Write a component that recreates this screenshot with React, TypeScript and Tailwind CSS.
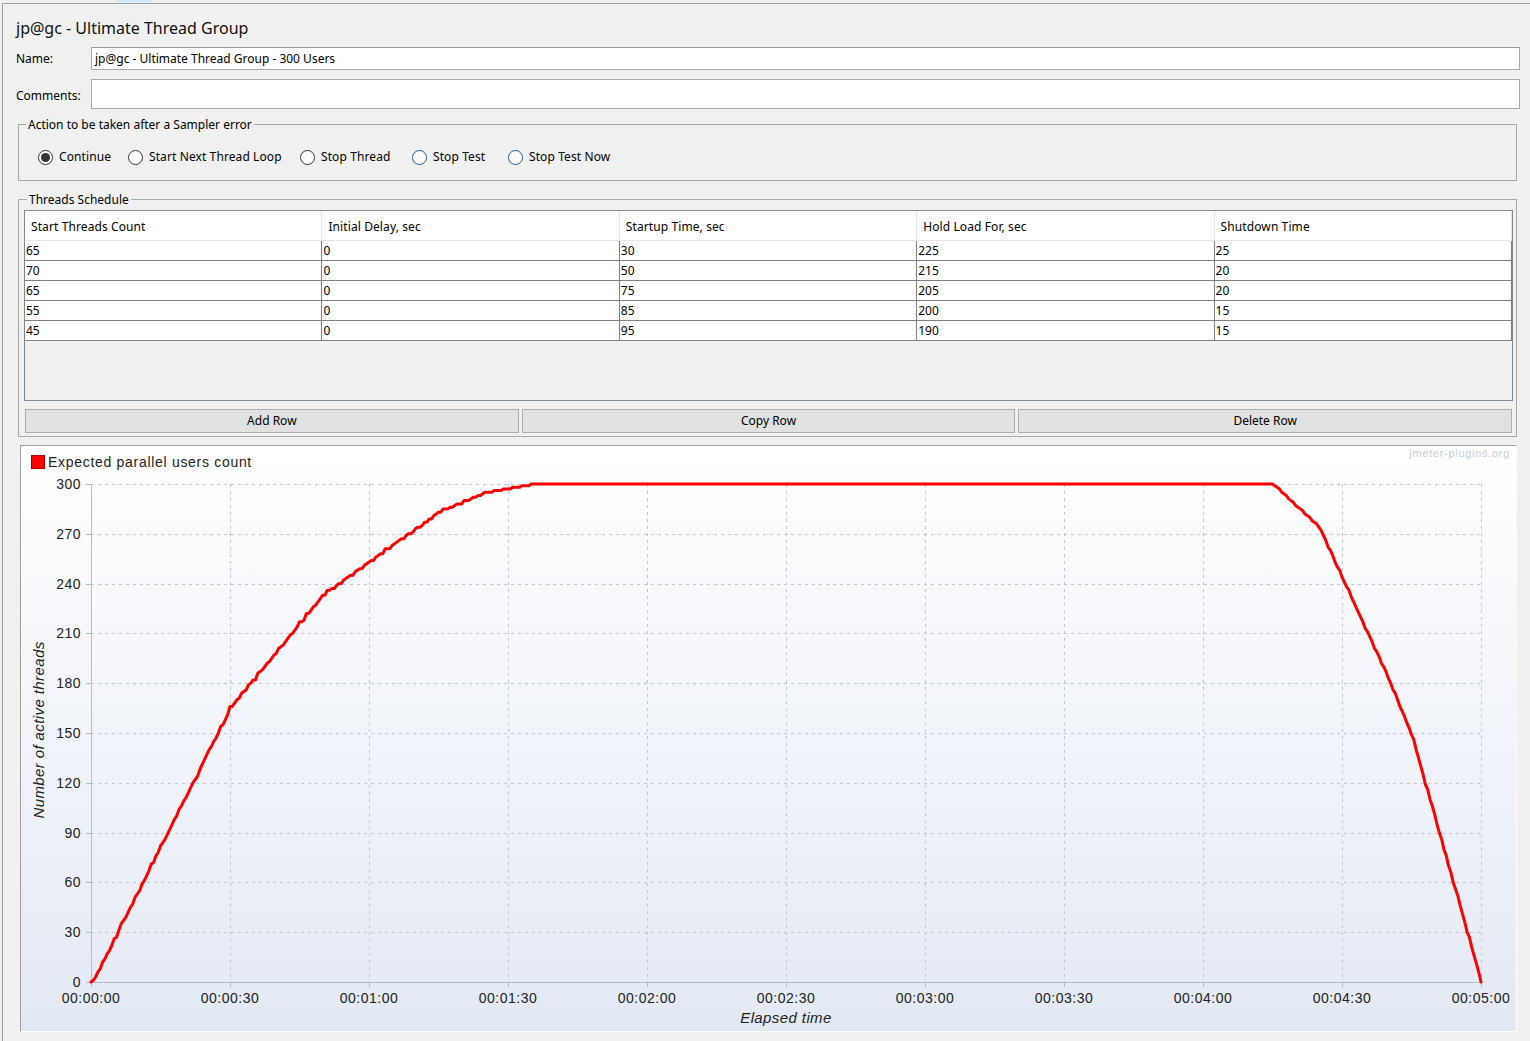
import React from 'react';

const rows: number[][] = [
  [65, 0, 30, 225, 25],
  [70, 0, 50, 215, 20],
  [65, 0, 75, 205, 20],
  [55, 0, 85, 200, 15],
  [45, 0, 95, 190, 15],
];

function active(t: number) {
  let s = 0;
  for (const [n, d, su, h, sd] of rows) {
    if (t < d) continue;
    const t1 = t - d;
    if (t1 < su) s += Math.floor((n * t1) / su);
    else if (t1 < su + h) s += n;
    else if (t1 < su + h + sd) s += Math.ceil(n * (1 - (t1 - su - h) / sd));
  }
  return s;
}

const W = 1495;
const H = 585;
const X0 = 70;
const X1 = 1460;
const Y0 = 536;
const Y1 = 38;
const px = (t: number) => X0 + (t / 300) * (X1 - X0);
const py = (v: number) => Y0 - (v / 300) * (Y0 - Y1);

function fmt(t: number) {
  const m = Math.floor(t / 60);
  const s = t % 60;
  return `00:${String(m).padStart(2, '0')}:${String(s).padStart(2, '0')}`;
}

function Chart() {
  const pts: string[] = [];
  for (let t = 0; t <= 300; t += 0.5) {
    pts.push(`${px(t).toFixed(1)},${py(active(t)).toFixed(1)}`);
  }
  const ticks = Array.from({ length: 11 }, (_, i) => i);
  const font = { fontFamily: '"Liberation Sans", Arial, sans-serif' };
  return (
    <svg width={W} height={H} viewBox={`0 0 ${W} ${H}`} className="block" style={font}>
      {/* legend */}
      <rect x={10.5} y={9.5} width={13} height={13} fill="#ff0000" stroke="#b00000" />
      <text x={27} y={21} fontSize={14} fill="#222" letterSpacing={0.7}>
        Expected parallel users count
      </text>
      <text x={1489} y={11} fontSize={11} fill="#c9ced8" textAnchor="end" letterSpacing={0.7}>
        jmeter-plugins.org
      </text>
      {/* grid */}
      {ticks.slice(1).map((i) => (
        <line
          key={'h' + i}
          x1={X0}
          x2={X1}
          y1={Math.round(py(i * 30)) + 0.5}
          y2={Math.round(py(i * 30)) + 0.5}
          stroke="#c3c7cf"
          strokeDasharray="3 4"
        />
      ))}
      {ticks.slice(1).map((i) => (
        <line
          key={'v' + i}
          x1={Math.round(px(i * 30)) + 0.5}
          x2={Math.round(px(i * 30)) + 0.5}
          y1={Y1}
          y2={Y0}
          stroke="#c3c7cf"
          strokeDasharray="3 4"
        />
      ))}
      {/* axes */}
      <line x1={X0 + 0.5} x2={X0 + 0.5} y1={Y1} y2={Y0 + 5} stroke="#b6bbc5" />
      <line x1={X0 - 5} x2={X1} y1={Y0 + 0.5} y2={Y0 + 0.5} stroke="#b6bbc5" />
      {ticks.map((i) => (
        <line
          key={'yt' + i}
          x1={X0 - 5}
          x2={X0}
          y1={Math.round(py(i * 30)) + 0.5}
          y2={Math.round(py(i * 30)) + 0.5}
          stroke="#b6bbc5"
        />
      ))}
      {ticks.map((i) => (
        <line
          key={'xt' + i}
          x1={Math.round(px(i * 30)) + 0.5}
          x2={Math.round(px(i * 30)) + 0.5}
          y1={Y0}
          y2={Y0 + 5}
          stroke="#b6bbc5"
        />
      ))}
      {/* labels */}
      {ticks.map((i) => (
        <text key={'yl' + i} x={60} y={py(i * 30) + 5} fontSize={14} fill="#222" textAnchor="end" letterSpacing={0.5}>
          {i * 30}
        </text>
      ))}
      {ticks.map((i) => (
        <text key={'xl' + i} x={px(i * 30)} y={557} fontSize={14} fill="#222" textAnchor="middle" letterSpacing={0.5}>
          {fmt(i * 30)}
        </text>
      ))}
      <text
        transform="translate(23,284) rotate(-90)"
        fontSize={15}
        fontStyle="italic"
        fill="#222"
        textAnchor="middle"
        letterSpacing={0.4}
      >
        Number of active threads
      </text>
      <text x={765} y={577} fontSize={15} fontStyle="italic" fill="#222" textAnchor="middle" letterSpacing={0.4}>
        Elapsed time
      </text>
      {/* curve */}
      <polyline points={pts.join(' ')} fill="none" stroke="#ff0000" strokeWidth={3} strokeLinejoin="round" strokeLinecap="round" />
    </svg>
  );
}

function Radio({ label, checked, blue, w }: { label: string; checked?: boolean; blue?: boolean; w?: string }) {
  return (
    <div className={`flex items-center h-[16px] ${w ?? ''}`}>
      <div
        className={`w-[15px] h-[15px] rounded-full border bg-white flex items-center justify-center shrink-0 ${
          blue ? 'border-[#24589a]' : 'border-[#333333]'
        }`}
      >
        {checked && <div className="w-[9px] h-[9px] rounded-full bg-[#333333]" />}
      </div>
      <span className="ml-[6px] text-[12px] leading-[16px] text-black whitespace-nowrap tracking-[0.1px]">{label}</span>
    </div>
  );
}

const headers = ['Start Threads Count', 'Initial Delay, sec', 'Startup Time, sec', 'Hold Load For, sec', 'Shutdown Time'];

export default function App() {
  return (
    <div
      className="w-[1530px] h-[1041px] overflow-hidden bg-[#f0f0f0] text-black"
      style={{ fontFamily: '"Noto Sans", Tahoma, sans-serif' }}
    >
      <div className="h-[3px]">
        <div className="ml-[116px] w-[36px] h-[2px] bg-[#cce8ff]" />
      </div>
      <div className="ml-[2px] border-t border-l border-[#a0a0a0] h-[1038px]">
        {/* title */}
        <div className="pl-[13px] pt-[13px] text-[16px] leading-[22px] text-[#111]">jp@gc - Ultimate Thread Group</div>
        {/* name */}
        <div className="mt-[8px] flex items-center h-[23px] pl-[13px] mr-[10px]">
          <div className="w-[75px] text-[12px] leading-[16px]">Name:</div>
          <div className="flex-1 h-full bg-white border border-[#a9a9a9] border-t-[#9a9a9a] flex items-center pl-[3px] text-[12px] leading-[16px]">
            jp@gc - Ultimate Thread Group - 300 Users
          </div>
        </div>
        {/* comments */}
        <div className="mt-[9px] flex items-center h-[30px] pl-[13px] mr-[10px]">
          <div className="w-[75px] text-[12px] leading-[16px] pt-[3px]">Comments:</div>
          <div className="flex-1 h-full bg-white border border-[#a9a9a9]" />
        </div>
        {/* action fieldset */}
        <fieldset className="mt-[6px] ml-[15px] mr-[13px] border border-[#a9a9a9] pl-[7px] pb-[15px]">
          <legend className="px-[2px] text-[12px] leading-[16px] pt-[2px]">Action to be taken after a Sampler error</legend>
          <div className="pt-[16px] pl-[12px] flex items-center">
            <Radio label="Continue" checked w="w-[90px]" />
            <Radio label="Start Next Thread Loop" w="w-[172px]" />
            <Radio label="Stop Thread" w="w-[112px]" />
            <Radio label="Stop Test" blue w="w-[96px]" />
            <Radio label="Stop Test Now" blue />
          </div>
        </fieldset>
        {/* threads schedule */}
        <fieldset className="mt-[10px] ml-[15px] mr-[13px] border border-[#a9a9a9] pl-[5px] pr-[3px] pb-[3px]">
          <legend className="ml-[3px] px-[2px] text-[12px] leading-[16px] pt-[1px]">Threads Schedule</legend>
          <div className="mt-[2px] h-[191px] border border-[#828790] bg-[#f0f0f0]">
            <div className="grid grid-cols-5 h-[30px] bg-white border-b border-[#e5e5e5]">
              {headers.map((h) => (
                <div key={h} className="border-r border-[#e5e5e5] pl-[6px] pt-[2px] flex items-center text-[12px] leading-[16px] tracking-[0.1px]">
                  {h}
                </div>
              ))}
            </div>
            {rows.map((r, i) => (
              <div key={i} className="grid grid-cols-5 h-[20px]">
                {r.map((v, j) => (
                  <div
                    key={j}
                    className="bg-white border-r border-b border-[#808080] pl-[1px] flex items-center text-[12px] leading-[16px]"
                  >
                    {v}
                  </div>
                ))}
              </div>
            ))}
          </div>
          <div className="mt-[8px] mx-[1px] grid grid-cols-3 gap-[3px]">
            {['Add Row', 'Copy Row', 'Delete Row'].map((b) => (
              <div
                key={b}
                className="h-[24px] bg-[#e1e1e1] border border-[#adadad] flex items-center justify-center text-[12px] leading-[16px]"
              >
                {b}
              </div>
            ))}
          </div>
        </fieldset>
        {/* chart */}
        <div className="mt-[8px] ml-[17px] w-[1497px] border-t border-l border-[#a0a0a0] border-r border-b border-r-white border-b-white">
          <div className="w-[1495px] h-[585px] bg-linear-to-b from-white to-[#e3e9f4]">
            <Chart />
          </div>
        </div>
      </div>
    </div>
  );
}
